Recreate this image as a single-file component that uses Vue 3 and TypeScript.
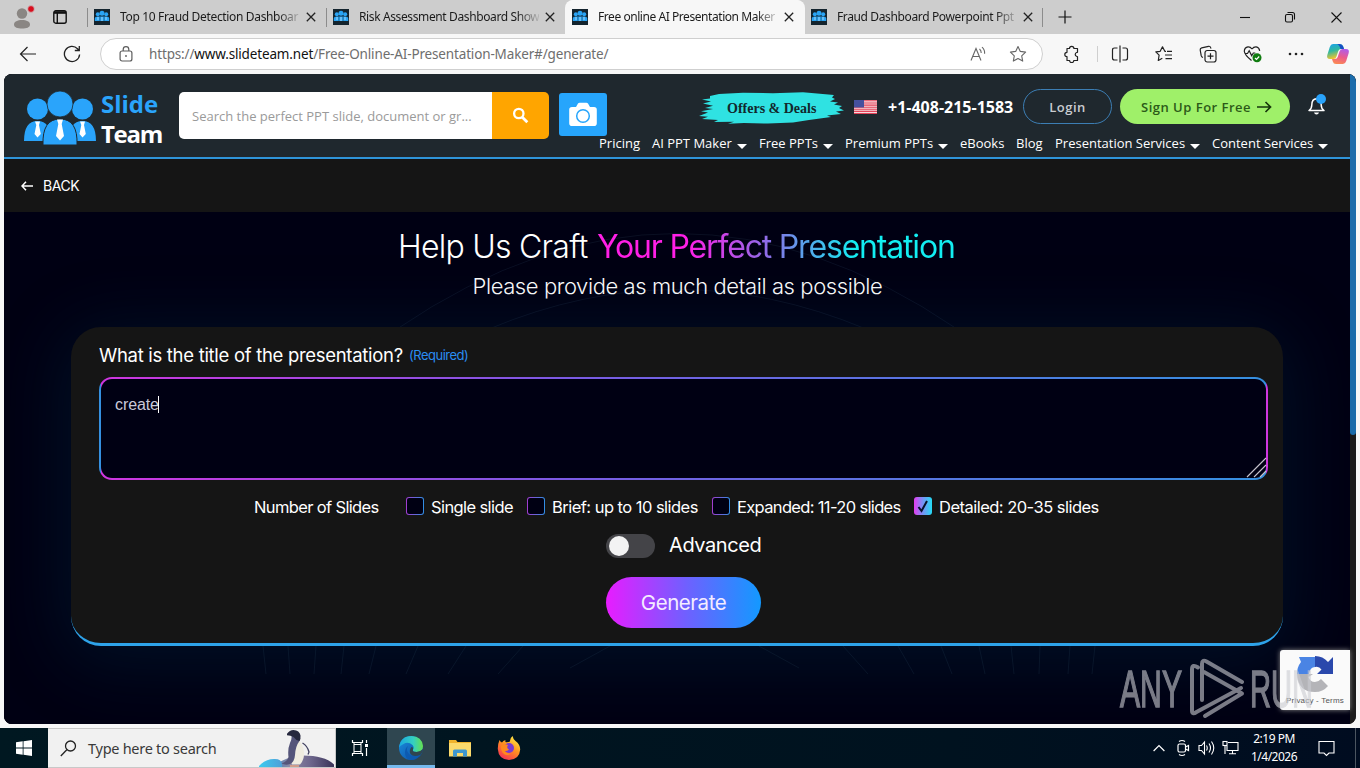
<script setup lang="ts">
import { ref } from 'vue'

interface Tab {
  title: string
  cls: string
  active?: boolean
}
interface NavItem {
  label: string
  cls: string
  menu: boolean
}
interface SlideOption {
  label: string
  cls: string
}

const tabs: Tab[] = [
  { title: 'Top 10 Fraud Detection Dashboar', cls: 't1' },
  { title: 'Risk Assessment Dashboard Show', cls: 't2' },
  { title: 'Free online AI Presentation Maker', cls: 't3', active: true },
  { title: 'Fraud Dashboard Powerpoint Ppt', cls: 't4' },
]

const nav: NavItem[] = [
  { label: 'Pricing', cls: 'n1', menu: false },
  { label: 'AI PPT Maker', cls: 'n2', menu: true },
  { label: 'Free PPTs', cls: 'n3', menu: true },
  { label: 'Premium PPTs', cls: 'n4', menu: true },
  { label: 'eBooks', cls: 'n5', menu: false },
  { label: 'Blog', cls: 'n6', menu: false },
  { label: 'Presentation Services', cls: 'n7', menu: true },
  { label: 'Content Services', cls: 'n8', menu: true },
]

const options: SlideOption[] = [
  { label: 'Single slide', cls: 'o1' },
  { label: 'Brief: up to 10 slides', cls: 'o2' },
  { label: 'Expanded: 11-20 slides', cls: 'o3' },
  { label: 'Detailed: 20-35 slides', cls: 'o4' },
]

const selected = ref(3)
const topic = ref('create')
</script>

<template>
  <div class="screen">
    <div class="tabstrip">
      <div class="profile">
        <svg width="24" height="28" viewBox="0 0 24 28">
          <circle cx="10" cy="11.500" r="5.200" fill="#8a8683" />
          <path d="M2 22.500c0-3 3.500-4.500 8-4.500s8 1.500 8 4.500-3.500 4-8 4-8-1-8-4z" fill="#8a8683" />
          <circle cx="19" cy="7" r="3.400" fill="#d80e1e" stroke="#cdcdcd" stroke-width=".8" />
        </svg>
      </div>
      <svg class="workspaces" width="14" height="14" viewBox="0 0 14 14" fill="none" stroke="#111" stroke-width="1.400">
        <rect x=".8" y=".8" width="12.400" height="12.400" rx="2" />
        <path d="M1 3h12M4.300 3v10" />
        <path d="M1 2.200h12" stroke-width="2" />
      </svg>
      <div v-for="t in tabs" :key="t.title" class="tab" :class="{ active: t.active }">
        <svg class="fav" width="16" height="16" viewBox="0 0 16 16">
          <rect width="16" height="16" fill="#14242e" />
          <g fill="#2aa4f4">
            <circle cx="3.800" cy="5.200" r="2" />
            <circle cx="8" cy="4.300" r="2.500" />
            <circle cx="12.200" cy="5.200" r="2" />
            <path d="M.8 12V9.500q0-2 3-2h8.400q3 0 3 2V12z" />
          </g>
          <path d="M4 8v3M8 8v4M12 8v3" stroke="#bfe6ff" stroke-width=".8" />
          <path d="M5.900 7v5M10.100 7v5" stroke="#14506e" stroke-width=".6" />
        </svg>
        <span class="tab-title" :class="t.cls">{{ t.title }}</span>
        <svg class="close" width="10" height="10" viewBox="0 0 10 10" stroke="#222" stroke-width="1.300">
          <path d="M.8.8l8.400 8.400M9.200.8L.8 9.200" />
        </svg>
      </div>
      <svg class="plus" width="14" height="14" viewBox="0 0 14 14" stroke="#111" stroke-width="1.200">
        <path d="M7 .5v13M.5 7h13" />
      </svg>
      <svg class="winbtns" width="104" height="14" viewBox="0 0 104 14" fill="none" stroke="#111" stroke-width="1.100">
        <path d="M1 7.500h10" />
        <rect x="46.500" y="4.500" width="7" height="7.500" rx="1.500" />
        <path d="M48.500 2.500h5q2 0 2 2v5" />
        <path d="M92.500 2.500l10 10M102.500 2.500l-10 10" />
      </svg>
    </div>

    <div class="toolbar">
      <svg class="tb-back" width="18" height="16" viewBox="0 0 18 16" fill="none" stroke="#222" stroke-width="1.200">
        <path d="M17 8H1.500M8.500 1L1.500 8l7 7" />
      </svg>
      <svg class="tb-reload" width="18" height="18" viewBox="0 0 18 18" fill="none" stroke="#222" stroke-width="1.300">
        <path d="M16.600 9.500A7.600 7.600 0 1 1 14.500 3.700L16 5.300M16.300 1v4.500h-4.500" />
      </svg>
      <div class="omnibox">
        <svg class="lock" width="14" height="16" viewBox="0 0 14 16" fill="none" stroke="#5c5c5c" stroke-width="1.200">
          <rect x="1.100" y="5" width="11.800" height="10" rx="2" />
          <path d="M4.200 5V3.400a2.800 2.800 0 0 1 5.600 0V5" />
          <circle cx="7" cy="10" r=".9" fill="#5c5c5c" stroke="none" />
        </svg>
        <span class="url">https://<b>www.slideteam.net</b>/Free-Online-AI-Presentation-Maker#/generate/</span>
        <svg class="read" width="16" height="16" viewBox="0 0 16 16" fill="none" stroke="#666" stroke-width="1.100">
          <path d="M1 14.500L6 2.500l5 12M2.800 10.500h6.400M9.500 3q1.800 1.500 1.700 4M12 1.200q3 2.600 2.600 6.600" />
        </svg>
        <svg class="star" width="18" height="18" viewBox="0 0 18 18" fill="none" stroke="#666" stroke-width="1.100" stroke-linejoin="round">
          <path d="M9 1.500l2.300 4.900 5.300.7-3.900 3.700 1 5.300L9 13.500l-4.700 2.600 1-5.300L1.400 7.100l5.300-.7z" />
        </svg>
      </div>
      <div class="tb-icons">
        <svg width="20" height="18" viewBox="0 0 20 18" fill="none" stroke="#222" stroke-width="1.200" stroke-linejoin="round">
          <path d="M5 3.500h2.500a2.200 2.200 0 0 1 4.400 0h3.600v3.600a.9.900 0 0 1-.9.400 2 2 0 0 0 0 3.800.9.900 0 0 1 .9.500v3.700h-3.700a2.100 2.100 0 0 1-4.200 0H5v-3.800a2.200 2.200 0 0 1 0-4.400z" />
        </svg>
        <i class="tb-sep"></i>
        <svg width="18" height="18" viewBox="0 0 18 18" fill="none" stroke="#222" stroke-width="1.200">
          <path d="M9 .5v17M6.500 3h-3q-2 0-2 2v8q0 2 2 2h3M11.500 3h3q2 0 2 2v8q0 2-2 2h-3" />
        </svg>
        <svg width="18" height="18" viewBox="0 0 18 18" fill="none" stroke="#222" stroke-width="1.200" stroke-linejoin="round">
          <path d="M11 6.300H9.800L7.500 1.800 5.200 6.300l-4.400.6 3.300 3.300-.8 5.300 4-2.200" />
          <path d="M12 6.300h5M10 10h7M10.500 13.700H17" />
        </svg>
        <svg width="18" height="18" viewBox="0 0 18 18" fill="none" stroke="#222" stroke-width="1.200">
          <rect x="6" y="5.500" width="11" height="11.500" rx="2.200" />
          <path d="M11.500 8.200v6M8.500 11.200h6M4 12.500q-1.400-.3-1.800-1.800L1.200 5Q1 3.300 2.700 2.900l6.800-1.600q1.700-.3 2.200 1.400l.4.800" />
        </svg>
        <svg width="20" height="18" viewBox="0 0 20 18" fill="none" stroke="#222" stroke-width="1.200">
          <path d="M9 4Q7.300 1.600 5 1.800 1.400 2.400 1.300 6.300 1.600 10 8.500 15.500M9 4q1.700-2.400 4.200-2.200 3 .5 3.500 4M1.500 8.500h3l1.700-2.800 2.500 5 1.600-2.700h2" />
          <circle cx="14" cy="12.800" r="4.500" fill="#107c10" stroke="none" />
          <path d="M12 13l1.500 1.500 2.700-3" stroke="#fff" />
        </svg>
        <svg width="16" height="18" viewBox="0 0 16 18" fill="#222">
          <circle cx="2" cy="9" r="1.300" /><circle cx="8" cy="9" r="1.300" /><circle cx="14" cy="9" r="1.300" />
        </svg>
      </div>
      <svg class="copilot" width="24" height="22" viewBox="0 0 24 22">
        <defs>
          <linearGradient id="cpa" x1="0" y1="0" x2=".3" y2="1">
            <stop offset="0" stop-color="#1aa0f0" /><stop offset=".5" stop-color="#2fb8a0" /><stop offset="1" stop-color="#f4c42c" />
          </linearGradient>
          <linearGradient id="cpb" x1=".6" y1="0" x2=".3" y2="1">
            <stop offset="0" stop-color="#b35be6" /><stop offset=".5" stop-color="#ec5a8c" /><stop offset="1" stop-color="#fb8b52" />
          </linearGradient>
        </defs>
        <path d="M7 1h7q2.500 0 3.200 2.500L18 6h-3q-2 0-2.700 2l-1.800 5.500Q9.800 16 7.500 16H4Q.3 16 1.300 12L3.800 4Q4.700 1 7 1z" fill="url(#cpa)" />
        <path d="M13.500 1q3 0 3.700 2.500L18 6h-3.500Q13 1 10.500 1z" fill="#174fc4" />
        <path d="M17 21h-7q-2.500 0-3.200-2.500L6 16h3q2 0 2.700-2l1.800-5.500Q14.200 6 16.500 6H20q3.700 0 2.700 4l-2.500 8Q19.300 21 17 21z" fill="url(#cpb)" />
      </svg>
    </div>

    <div class="viewport">
      <div class="page">
        <header>
          <svg class="people" width="72" height="54" viewBox="0 0 72 54">
            <g fill="#2aa4fb">
              <circle cx="13.500" cy="18" r="10.500" /><circle cx="58.500" cy="18" r="10.500" />
              <path d="M0 50q0-20 13.500-20T27 50zM45 50q0-20 13.500-20T72 50z" />
              <path d="M19 54q-1-26 17-26t17 26z" stroke="#1f282e" stroke-width="1" />
              <circle cx="36" cy="13" r="13" stroke="#1f282e" stroke-width=".8" />
            </g>
            <g fill="#fff">
              <path d="M33 28.500h6l-1.300 4.500L40 45l-4 4.500-4-4.500 2.300-12z" />
              <path d="M11 30.500h5l-1 3.500 1.800 9-3.300 3.500-3-3.500 1.800-9zM56 30.500h5l-1 3.500 1.800 9-3.300 3.500-3-3.500 1.800-9z" />
            </g>
          </svg>
          <div class="wordmark"><span class="w-slide">Slide</span><span class="w-team">Team</span></div>
          <div class="search"><span>Search the perfect PPT slide, document or gr...</span></div>
          <div class="search-btn">
            <svg width="17" height="17" viewBox="0 0 17 17" fill="none" stroke="#fff">
              <circle cx="6.800" cy="6.500" r="4.700" stroke-width="2.300" /><path d="M10.300 10.200l5 5" stroke-width="2.800" />
            </svg>
          </div>
          <div class="camera">
            <svg width="28" height="26" viewBox="0 0 28 26">
              <path d="M3 5h4l2-3.500Q9.600.8 10.600.8h6.800q1 0 1.600.7L21 5h4q2.800 0 2.800 2.800v13.400q0 2.800-2.800 2.800H3Q.2 24 .2 21.200V7.800Q.2 5 3 5z" fill="#fff" />
              <circle cx="14" cy="14" r="6.300" fill="#fff" stroke="#26a5fc" stroke-width="1.500" />
            </svg>
          </div>
          <div class="right">
            <div class="actions">
              <div class="offers">
                <svg width="146" height="33" viewBox="0 0 146 33" fill="#2fe2e2">
                  <path d="M11 4l9-2 24-1.200 30 .4 30-1 31 2.800-2 2.500 3 1.500-5 2.500 8 1-4 2 8 1.500-3 2 5 2.500-8 1 5 2.500-14 1.500 4 1.500-22 3-16 2.500-25 1-24-.5-16 .8 6-2-20 .2 4-2-16-1 6-2.300L0 24l9-3.500-7-1.200 12-2.300-8-1 8-2.300-10-2.200 8-2-9-2 8-1z" />
                </svg>
                <span>Offers &amp; Deals</span>
              </div>
              <svg class="flag" width="23" height="14" viewBox="0 0 23 14">
                <rect width="23" height="14" fill="#f6d8dc" />
                <path d="M0 .8h23M0 3h23M0 5.100h23M0 7.200h23M0 9.300h23M0 11.400h23M0 13.500h23" stroke="#e4445a" stroke-width="1.100" />
                <rect width="10" height="7.500" fill="#46509e" />
              </svg>
              <span class="phone">+1-408-215-1583</span>
              <span class="login"><span>Login</span></span>
              <span class="signup"><span>Sign Up For Free</span>
                <svg width="15" height="12" viewBox="0 0 15 12" fill="none" stroke="#17360c" stroke-width="1.700"><path d="M0 6h13.500M8.500 1l5 5-5 5" /></svg>
              </span>
              <svg class="bell" width="18" height="22" viewBox="0 0 18 22" fill="none" stroke="#fff" stroke-width="1.500">
                <path d="M1 16.500q2.800-2 2.800-5.500 0-6 4.700-6.200 4.700.2 4.700 6.200 0 3.500 2.800 5.500z" stroke-linejoin="round" />
                <path d="M6 18.500h5q-.5 2-2.500 2t-2.500-2z" fill="#fff" stroke="none" />
                <circle cx="13" cy="5" r="5" fill="#29a3fb" stroke="none" />
              </svg>
            </div>
            <nav>
              <span v-for="n in nav" :key="n.label" class="nav-item" :class="n.cls"><span>{{ n.label }}</span><i v-if="n.menu" class="caret"></i></span>
            </nav>
          </div>
        </header>

        <div class="backbar">
          <svg width="12" height="10" viewBox="0 0 12 10" fill="none" stroke="#fff" stroke-width="1.500"><path d="M12 5H1.200M5 .8L1 5l4 4.200" /></svg>
          <span>BACK</span>
        </div>

        <main>
          <svg class="lines" width="1346" height="512" viewBox="0 0 1346 512" fill="none" stroke="#5b8ca0">
            <g opacity=".11">
              <path d="M393 117Q673-74 953 117M485 117Q673 38 862 117" />
            </g>
            <g opacity=".12">
              <path d="M259 434l3 28M284 434l2 28M312 434l-2 28M340 434l-3 28M372 434l-7 28M414 434l-12 28M462 434l-18 28M519 434l-25 28M606 434l-40 22M755 434l40 22M839 434l25 28M894 434l16 28M937 434l11 28M975 434l6 28M1007 434l3 28M1036 434l-1 28M1066 434l-2 28M1091 434l-3 28" />
            </g>
          </svg>
          <h1><span class="h-a">Help Us Craft</span><span class="h-b">Your Perfect Presentation</span></h1>
          <p class="sub"><span>Please provide as much detail as possible</span></p>
          <section class="card">
            <div class="q"><span class="q-title">What is the title of the presentation?</span><span class="q-req">(Required)</span></div>
            <div class="field">
              <span class="typed">{{ topic }}</span><i class="cursor"></i>
              <svg class="grip" width="22" height="22" viewBox="0 0 22 22" stroke="#c5c2cc" stroke-width="1.100"><path d="M1 20L20 1M8 20L20 8M14 20l6-6" /></svg>
            </div>
            <div class="opts">
              <span class="opts-label">Number of Slides</span>
              <span v-for="(o, i) in options" :key="o.label" class="opt" :class="o.cls" @click="selected = i">
                <i class="box" :class="{ on: selected === i }">
                  <svg v-if="selected === i" width="14" height="14" viewBox="0 0 14 14" fill="none" stroke="#08112c" stroke-width="2"><path d="M2.500 8l3 4L11 2" /></svg>
                </i>
                <span>{{ o.label }}</span>
              </span>
            </div>
            <div class="adv"><i class="toggle"></i><span>Advanced</span></div>
            <button class="generate"><span>Generate</span></button>
          </section>
        </main>
      </div>
      <div class="scroll"><i></i></div>
    </div>

    <div class="captcha">
      <svg width="38" height="38" viewBox="0 0 38 38">
        <path d="M19 1v11q-5 0-6 7H1Q1 12 5 7L3 2H19z" fill="#4a84e4" />
        <path d="M19 1q8 0 13 6l5-5v17H21l4.500-4.500Q23 11 19 12z" fill="#2a48ac" />
        <path d="M1 19q1 18 18 18 8 0 13-6l-7-7q-2.500 3-6 3-5 0-6.500-5L17 19z" fill="#b4b4b8" />
      </svg>
      <span>Privacy - Terms</span>
    </div>
    <svg class="watermark" width="200" height="66" viewBox="0 0 200 66">
      <g fill="#cbccd2" stroke="#cbccd2" stroke-width="1.500" font-family="Liberation Sans, sans-serif" font-size="51">
        <text x="3" y="52.500" textLength="62" lengthAdjust="spacingAndGlyphs">ANY</text>
        <text x="133" y="52.500" textLength="63" lengthAdjust="spacingAndGlyphs">RUN</text>
      </g>
      <g fill="none" stroke="#cbccd2" stroke-width="4" stroke-linejoin="round" stroke-linecap="round">
        <path d="M81 13.500q-6-4-6 2v41q0 4.500 4.500 1.500L124 34" />
        <path d="M85 46V10q0-5 4.500-2.500L125 28" />
        <path d="M87 18l38 21.500L88 62" />
      </g>
    </svg>

    <div class="taskbar">
      <div class="start">
        <svg width="16" height="16" viewBox="0 0 16 16" fill="#fff"><path d="M0 2.300L6.700 1.300v6.200H0zM7.500 1.200L16 0v7.500H7.500zM0 8.400h6.700v6.300L0 13.700zM7.500 8.400H16V16l-8.500-1.200z" /></svg>
      </div>
      <div class="tsearch">
        <svg class="mag" width="17" height="17" viewBox="0 0 17 17" fill="none" stroke="#222" stroke-width="1.300"><circle cx="10.500" cy="6" r="5" /><path d="M6.800 9.800L.8 16" /></svg>
        <span>Type here to search</span>
        <svg class="penguin" width="76" height="38" viewBox="0 0 76 38">
          <defs>
            <linearGradient id="mound" x1="0" x2="1"><stop offset="0" stop-color="#4b7fb4" /><stop offset=".25" stop-color="#8d8aa6" /><stop offset=".6" stop-color="#6d668c" /><stop offset="1" stop-color="#3a3358" /></linearGradient>
            <linearGradient id="ice" x1="0" x2="1"><stop offset="0" stop-color="#3bcdf0" /><stop offset="1" stop-color="#4f9fd8" /></linearGradient>
          </defs>
          <path d="M16 38q8-10.500 28-11.500 22 0 31 9V38z" fill="url(#mound)" />
          <path d="M-1 38q7-8 16-8 9-.5 8 8z" fill="url(#ice)" />
          <path d="M37 8q7 6 8 15 .5 8-4 12.500h-8q-3-8-1-16 1-7 3-11z" fill="#efece0" />
          <path d="M32.500 7q.5 3-1.500 7-2.500 6-1.500 14-1 4-7 6.500 4 2 8.500.5 4.500-2 5-9 .5-9 4.500-14 1.500-3-.5-5z" fill="#55557a" />
          <path d="M28 4.800q2.500-3.800 6.500-3.800 6 .3 7 5.500.3 3.500-1 5.500-4-1-6-4-3-1.500-6.500-1.700z" fill="#26283e" />
          <path d="M43.500 14q5 3 6.500 9l-1 2.500" fill="none" stroke="#41415f" stroke-width="1.300" />
          <path d="M31 37h9" stroke="#d9a08a" stroke-width="1.800" />
        </svg>
      </div>
      <div class="tv">
        <svg width="18" height="18" viewBox="0 0 18 18" fill="none" stroke="#fff" stroke-width="1.200"><path d="M1.500 1v2.500h10V1M1.500 17v-2.500h10V17" /><path d="M3 3.500v11M10 3.500v11M3 5.500h7M3 12.500h7" stroke-width="1" /><path d="M15.500 1v3M15.500 9v8" /><rect x="14" y="5" width="3" height="3" fill="#fff" stroke="none" /></svg>
      </div>
      <div class="task edge">
        <svg width="24" height="24" viewBox="0 0 24 24">
          <defs>
            <linearGradient id="ea" x1="0" x2="1"><stop offset="0" stop-color="#1aa8e0" /><stop offset=".6" stop-color="#35cfc0" /><stop offset="1" stop-color="#66e04c" /></linearGradient>
            <linearGradient id="eb" x1="0" y1="0" x2="1" y2="1"><stop offset="0" stop-color="#1b8fe0" /><stop offset="1" stop-color="#0a4aa0" /></linearGradient>
          </defs>
          <circle cx="12" cy="12" r="12" fill="url(#eb)" />
          <path d="M.1 11.500Q1.500 0 12.500 0 23 .5 24 10q0 6-6.500 6-4.500 0-3.500-2.500 1.500-2-.5-4.500Q9 5 4.500 8 1 9.500.1 11.500z" fill="url(#ea)" />
          <path d="M9 10q-2.500 4 1 8t11.500.8Q17 24 12 24 6 23 6 16.500 6 12 9 10z" fill="#0d5ab0" />
          <path d="M14 13.500q-1 2.500 3.500 2.500 3.500 0 6.500-3 0 3.500-2.500 5.800-7 3-10-.8-1.800-3.500 1-7 2 0 1.500 2.500z" fill="#2f4650" />
        </svg>
      </div>
      <div class="task">
        <svg width="22" height="18" viewBox="0 0 22 18"><path d="M0 1h7l1.500 2H22v14H0z" fill="#f0b32c" /><path d="M0 4h22v13.500H0z" fill="#fbda6c" /><path d="M4 17.500V12q0-1.500 1.500-1.500h11q1.500 0 1.500 1.500v5.500h-4V14H8v3.500z" fill="#3f97cf" /></svg>
      </div>
      <div class="task fox">
        <svg width="24" height="24" viewBox="0 0 24 24">
          <defs>
            <linearGradient id="fx" x1=".8" y1="0" x2=".2" y2="1"><stop offset="0" stop-color="#fff04a" /><stop offset=".45" stop-color="#ff9320" /><stop offset="1" stop-color="#f52a58" /></linearGradient>
          </defs>
          <path d="M2.500 4q1 2 2.500 2.500Q6 4.500 8.500 4q-.5 1.500.3 2.200 3 .2 4-.7 0-3.500 2.800-5.500Q16 3 18.500 5q4.700 3.500 4.700 8.500Q22.500 23.500 12 24 1.500 23.500.8 13 .7 8 2.500 4z" fill="url(#fx)" />
          <circle cx="12" cy="12" r="5" fill="#7a3bd0" />
          <path d="M4 10q3-3 7-1-2 3 1 4.500-2 2-4.500 1.500Q10 18 14 17.500 9 21 5.500 16.500 3.500 13 4 10z" fill="#ff8a1e" />
        </svg>
      </div>
      <div class="tray">
        <svg width="12" height="8" viewBox="0 0 12 8" fill="none" stroke="#fff" stroke-width="1.200"><path d="M.6 7L6 1.500 11.400 7" /></svg>
        <svg class="meet" width="14" height="18" viewBox="0 0 14 18" fill="none" stroke="#fff" stroke-width="1.200"><rect x="2" y="5" width="7.500" height="8" rx="1.500" /><path d="M9.500 8l3-1.500v5l-3-1.500M3 2.500q3-2 6 0M3 15.500q3 2 6 0" /></svg>
        <svg class="snd" width="18" height="16" viewBox="0 0 18 16" fill="none" stroke="#fff" stroke-width="1.100"><path d="M1 5.500h2.500L6.500 2v12l-3-3.500H1zM8.500 5.500q1.500 2.500 0 5M11 3.500q3 4.500 0 9M13.500 1.500q4.500 6.500 0 13" /></svg>
        <svg class="net" width="17" height="16" viewBox="0 0 17 16" fill="none" stroke="#fff" stroke-width="1.100"><path d="M6 2.500h10v8H5V6M10.500 10.500v3M7 13.800h7M3 6v8" /><rect x="1" y="1.500" width="4" height="4" /></svg>
        <div class="clock"><span class="time">2:19 PM</span><span class="date">1/4/2026</span></div>
        <svg class="note" width="17" height="17" viewBox="0 0 17 17" fill="none" stroke="#fff" stroke-width="1.100"><path d="M1 1.500h15v11.500h-5L8.500 15.500 6 13H1z" /></svg>
        <i class="desk"></i>
      </div>
    </div>
  </div>
</template>

<style>
html,
body {
  margin: 0;
  overflow: hidden;
}
</style>

<style scoped>
.screen {
  position: relative;
  width: 1360px;
  height: 768px;
  overflow: hidden;
  display: flex;
  flex-direction: column;
  background: #f7f7f7;
  font-family: 'Open Sans', 'Noto Sans', sans-serif;
  white-space: nowrap;
}
svg { display: block; flex: none; }
i { display: block; flex: none; font-style: normal; }

/* tab strip */
.tabstrip { height: 34px; flex: none; background: #cdcdcd; display: flex; align-items: center; }
.profile { width: 24px; height: 28px; margin-left: 12px; margin-top: -2px; }
.workspaces { margin-left: 17px; margin-right: 20px; }
.tab { width: 239px; height: 34px; flex: none; display: flex; align-items: center; box-sizing: border-box; position: relative; }
.tab::before { content: ''; position: absolute; left: 0; top: 8px; width: 1px; height: 19px; background: #8c8c8c; }
.tab:nth-last-of-type(1)::after { content: ''; position: absolute; right: 0; top: 8px; width: 1px; height: 19px; background: #8c8c8c; }
.tab.active { background: #f7f7f7; border-radius: 8px 8px 0 0; box-shadow: 1px 0 #f7f7f7; }
.tab.active::before, .tab.active + .tab::before { display: none; }
.fav { margin-left: 7px; }
.tab-title { width: 180px; margin-left: 10px; overflow: hidden; font: 12px/18px 'Noto Sans', sans-serif; color: #1b1b1b; -webkit-mask-image: linear-gradient(90deg, #000 158px, transparent 183px); mask-image: linear-gradient(90deg, #000 158px, transparent 183px); }
.t1 { letter-spacing: -0.34px; }
.t2 { letter-spacing: -0.38px; }
.t3 { letter-spacing: -0.44px; }
.t4 { letter-spacing: -0.37px; }
.close { margin-left: 6px; }
.plus { margin-left: 15px; }
.winbtns { margin-left: auto; margin-right: 17px; }

/* toolbar */
.toolbar { height: 40px; flex: none; display: flex; align-items: center; }
.tb-back { margin-left: 19px; }
.tb-reload { margin-left: 26px; }
.omnibox { margin-left: 19px; width: 943px; height: 32px; box-sizing: border-box; background: #fff; border: 1px solid #cfcfcf; border-radius: 16px; display: flex; align-items: center; }
.lock { margin-left: 18px; }
.url { margin-left: 16px; width: 816px; font: 13.5px/20px 'Noto Sans', sans-serif; color: #6e6e6e; letter-spacing: -0.15px; }
.url b { font-weight: 400; color: #111; }
.read { margin-left: 5px; }
.star { margin-left: 23px; }
.tb-icons { margin-left: 19px; display: flex; align-items: center; }
.tb-icons svg { margin-right: 26px; }
.tb-icons svg:first-child { margin-right: 15px; }
.tb-icons svg:nth-last-child(2) { margin-right: 25px; }
.tb-icons svg:last-child { margin-right: 0; }
.tb-sep { width: 1px; height: 16px; background: #cfcfcf; margin-right: 13px; }
.copilot { margin-left: auto; margin-right: 10px; }

/* web page */
.viewport { width: 1352px; height: 650px; margin: 0 4px 4px; border-radius: 8px; overflow: hidden; display: flex; background: #1a1a1a; flex: none; }
.page { width: 1346px; height: 650px; flex: none; display: flex; flex-direction: column; background: #00000f; }
.scroll { width: 6px; background: #1b1b1b; }
.scroll i { height: 361px; background: #1b6cab; border-radius: 0 0 3px 3px; }

header { height: 83px; border-bottom: 2px solid #2f95da; background: #1f282e; display: flex; align-items: flex-start; flex: none; }
.people { margin: 17px 0 0 20px; }
.wordmark { width: 78px; margin-left: 5px; display: flex; flex-direction: column; font: 700 24px/30px 'Open Sans', sans-serif; padding-top: 15px; }
.w-slide { color: #2aa4fb; letter-spacing: 0; }
.w-team { color: #fff; letter-spacing: -1.3px; }
.search { width: 313px; height: 47px; margin-top: 18px; background: #fff; border-radius: 5px 0 0 5px; box-sizing: border-box; padding-left: 13px; font-size: 13px; line-height: 49px; color: #9a9a9a; }
.search-btn { width: 57px; height: 47px; margin-top: 18px; background: #ffa500; border-radius: 0 5px 5px 0; display: flex; align-items: center; justify-content: center; }
.camera { width: 48px; height: 43px; margin: 19px 0 0 10px; background: #26a5fc; border-radius: 3px; display: flex; align-items: center; justify-content: center; }
.right { width: 743px; margin-left: -12px; padding-top: 13px; display: flex; flex-direction: column; }
.actions { height: 39px; display: flex; align-items: center; padding-left: 105px; }
.offers { width: 146px; height: 33px; position: relative; margin: 4px 0 0 -1px; }
.offers span { position: absolute; left: 28px; top: 8px; font: 700 14px/17px 'Liberation Serif', serif; color: #12282c; }
.flag { margin-left: 9px; }
.phone { width: 125px; margin-left: 11px; margin-top: 1px; font-weight: 700; font-size: 16px; color: #fff; }
.login { width: 89px; height: 35px; margin-left: 10px; box-sizing: border-box; border: 1px solid #3c7eb4; border-radius: 18px; display: flex; align-items: center; justify-content: center; color: #c9ccd0; font-weight: 600; font-size: 13px; letter-spacing: .5px; }
.signup { width: 170px; height: 35px; margin-left: 8px; border-radius: 18px; background: #9ff069; display: flex; align-items: center; box-sizing: border-box; padding-left: 21px; color: #2c5a18; font-weight: 600; font-size: 13px; letter-spacing: .5px; }
.signup svg { margin-left: 6px; }
.bell { margin-left: 18px; margin-top: -4px; }
nav { height: 18px; margin-top: 8px; display: flex; justify-content: flex-end; align-items: center; gap: 12px; padding-right: 10px; color: #fff; font-size: 13px; line-height: 18px; }
.nav-item { display: flex; align-items: center; justify-content: space-between; flex: none; }
.n1 { width: 41px; } .n2 { width: 95px; } .n3 { width: 74px; } .n4 { width: 103px; }
.n5 { width: 44px; } .n6 { width: 27px; } .n7 { width: 145px; } .n8 { width: 116px; }
.caret { width: 0; height: 0; border: 5px solid transparent; border-top-color: #fff; border-bottom: 0; margin-top: 6px; }

.backbar { height: 53px; flex: none; background: #151515; display: flex; align-items: center; padding-left: 17px; color: #fff; font: 14px/18px 'Inter', sans-serif; }
.backbar span { margin: 1px 0 0 10px; letter-spacing: -0.4px; }

main { position: relative; height: 512px; display: flex; flex-direction: column; align-items: center; font-family: 'Inter', 'Noto Sans', sans-serif; color: #fff; background: #000013; }
.lines { position: absolute; left: 0; top: 0; }
h1 { position: relative; margin: 15px 0 0 -2px; width: 556px; height: 40px; display: flex; font-weight: 300; font-size: 32px; line-height: 40px; }
.h-a { width: 199px; flex: none; letter-spacing: -0.75px; }
.h-b { flex: none; width: 360px; letter-spacing: -1.18px; font-weight: 400; color: transparent; background: linear-gradient(90deg, #ff1fe6 25%, #8a70e8 48%, #12eef2 72%); background-clip: text; -webkit-background-clip: text; }
.sub { position: relative; margin: 6px 0 0; width: 409px; font-weight: 300; font-size: 22px; line-height: 26px; letter-spacing: -0.41px; }
.card { position: relative; width: 1212px; height: 319px; margin: 28px 0 0 0; box-sizing: border-box; border-bottom: 3px solid #2ea3ea; border-radius: 30px; background: #151515; padding: 0 15px 0 28px; display: flex; flex-direction: column; box-shadow: 0 10px 70px 8px rgba(0, 50, 75, .33); }
.q { display: flex; align-items: center; height: 26px; margin-top: 15px; }
.q-title { width: 310px; font-size: 18.5px; letter-spacing: -0.3px; }
.q-req { font-size: 13px; color: #2a8df2; letter-spacing: -0.5px; }
.field { position: relative; height: 103px; margin-top: 9px; box-sizing: border-box; border: 2px solid transparent; border-radius: 13px; background: linear-gradient(#000013, #000013), linear-gradient(90deg, #cf36e0, #7b5ae4 40%, #3590e0); background-clip: padding-box, border-box; background-origin: padding-box, padding-box; display: flex; padding: 16px 0 0 14px; font: 16px/19px 'Liberation Sans', sans-serif; color: #c9c9da; letter-spacing: -0.1px; }
.cursor { width: 1px; height: 17px; background: #fff; margin: 1px 0 0 -1px; }
.grip { position: absolute; right: -2px; bottom: -1px; }
.opts { display: flex; align-items: center; height: 24px; margin: 15px 0 0 155px; font-size: 16.5px; letter-spacing: -0.56px; }
.opts-label { width: 152px; letter-spacing: -0.64px; }
.opt { display: flex; align-items: center; }
.box { width: 18px; height: 18px; box-sizing: border-box; border: 1px solid transparent; border-radius: 3px; margin: -2px 7px 0 0; background: linear-gradient(#000013, #000013) padding-box, linear-gradient(90deg, #a33ccf, #2f8fe4) border-box; display: flex; align-items: center; justify-content: center; }
.box.on { background: linear-gradient(90deg, #e43cf0, #7f8cf5 45%, #23dcf5) border-box; }
.o1 { width: 121px; letter-spacing: -0.6px; } .o2 { width: 185px; letter-spacing: -0.53px; } .o3 { width: 202px; letter-spacing: -0.66px; } .o4 { width: 185px; letter-spacing: -0.52px; }
.adv { display: flex; align-items: center; height: 26px; margin: 14px 0 0 507px; font-size: 20px; letter-spacing: -0.42px; }
.adv span { margin-top: -2px; }
.toggle { width: 49px; height: 24px; border-radius: 12px; background: #444448; margin-right: 14px; display: flex; align-items: center; }
.toggle::before { content: ''; width: 20px; height: 20px; margin-left: 3px; border-radius: 50%; background: #f3f3f3; }
.generate { width: 155px; height: 51px; margin: 18px 0 0 507px; border: 0; border-radius: 26px; background: linear-gradient(90deg, #e81cff, #6f60ff 52%, #1399ff); color: #f4ecff; font: 20.5px/26px 'Inter', sans-serif; letter-spacing: -0.45px; padding: 0; flex: none; }

.captcha { position: absolute; left: 1280px; top: 650px; width: 70px; height: 60px; background: #fafafa; border-radius: 3px 0 0 3px; box-shadow: 0 0 5px #888; display: flex; flex-direction: column; align-items: center; }
.captcha svg { margin-top: 5px; }
.captcha span { font: 8px/10px 'Liberation Sans', sans-serif; color: #555; margin-top: 3px; letter-spacing: .2px; }
.watermark { position: absolute; left: 1117px; top: 654px; opacity: .6; }

/* taskbar */
.taskbar { height: 40px; flex: none; background: linear-gradient(90deg, #001821, #00121f 70%, #000c20); display: flex; }
.start { width: 48px; display: flex; align-items: center; justify-content: center; }
.tsearch { width: 288px; height: 40px; box-sizing: border-box; border: 1px solid #c8c8c8; border-left: 0; background: #f1f1f1; display: flex; align-items: center; color: #3a3a3a; font: 14.5px/20px 'Noto Sans', sans-serif; overflow: hidden; }
.tsearch > span { width: 172px; margin-left: 11px; letter-spacing: -0.27px; }
.mag { margin-left: 12px; }
.penguin { flex: none; }
.tv { width: 51px; display: flex; align-items: center; padding-left: 15px; box-sizing: border-box; }
.task { width: 48px; height: 40px; display: flex; align-items: center; justify-content: center; box-sizing: border-box; margin-right: 1px; }
.edge { background: #2f4650; border-bottom: 3px solid #76b9ed; padding-top: 3px; }
.tray { margin-left: auto; display: flex; align-items: center; color: #fff; }
.meet { margin-left: 11px; }
.snd { margin-left: 8px; }
.net { margin-left: 6px; }
.clock { width: 60px; margin-left: 5px; display: flex; flex-direction: column; align-items: center; font: 12px/18px 'Noto Sans', sans-serif; letter-spacing: -0.5px; }
.note { margin-left: 14px; }
.desk { width: 1px; height: 40px; background: #4b5560; margin: 0 4px 0 20px; }
</style>
